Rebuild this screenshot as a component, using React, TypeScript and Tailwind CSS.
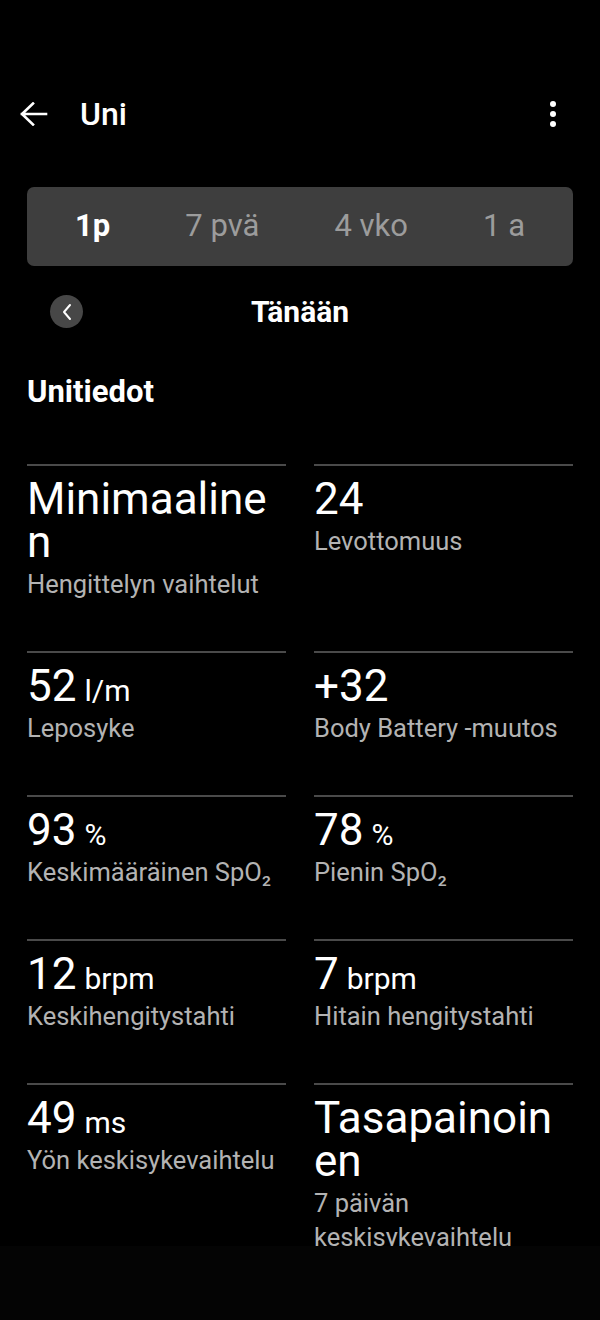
import React from "react";

const font = { fontFamily: "Roboto, 'Noto Sans', sans-serif" };

type Cell = { value: string; unit?: string; label: string };

const rows: [Cell, Cell][] = [
  [
    { value: "Minimaalinen", label: "Hengittelyn vaihtelut" },
    { value: "24", label: "Levottomuus" },
  ],
  [
    { value: "52", unit: "l/m", label: "Leposyke" },
    { value: "+32", label: "Body Battery -muutos" },
  ],
  [
    { value: "93", unit: "%", label: "Keskimääräinen SpO₂" },
    { value: "78", unit: "%", label: "Pienin SpO₂" },
  ],
  [
    { value: "12", unit: "brpm", label: "Keskihengitystahti" },
    { value: "7", unit: "brpm", label: "Hitain hengitystahti" },
  ],
  [
    { value: "49", unit: "ms", label: "Yön keskisykevaihtelu" },
    { value: "Tasapainoinen", label: "7 päivän keskisykevaihtelu" },
  ],
];

function StatCell({ c }: { c: Cell }) {
  return (
    <div className="border-t-[2px] border-[#4a4a4a] pt-[12px] pb-[50px] min-w-0">
      <div className="text-[44px] leading-[43px] text-white break-words">
        {c.value}
        {c.unit && <span className="text-[30px] leading-none ml-[8px]">{c.unit}</span>}
      </div>
      <div className="mt-[3px] text-[25.5px] leading-[34px] text-[#b3b3b3]">{c.label}</div>
    </div>
  );
}

export default function App() {
  return (
    <div className="w-[600px] h-[1320px] bg-black flex flex-col overflow-hidden" style={font}>
      <div className="h-[1246px] overflow-hidden shrink-0">
        {/* header */}
        <div className="h-[80px] mt-[74px] flex items-center px-[20px]">
          <svg width="28" height="24" viewBox="0 0 28 24" className="shrink-0">
            <path d="M2 12 H26 M13 1.5 L2 12 L13 22.5" stroke="white" strokeWidth="2.6" fill="none" strokeLinecap="square" />
          </svg>
          <div className="ml-[32px] text-[32px] font-medium text-white leading-none">Uni</div>
          <div className="ml-auto mr-[24px] flex flex-col gap-[4px] items-center">
            <div className="w-[6px] h-[6px] rounded-full bg-white" />
            <div className="w-[6px] h-[6px] rounded-full bg-white" />
            <div className="w-[6px] h-[6px] rounded-full bg-white" />
          </div>
        </div>

        {/* segmented */}
        <div className="mx-[27px] mt-[33px] h-[79px] rounded-[7px] bg-[#3e3e3e] flex items-center justify-between px-[48px] text-[31px]">
          <span className="text-white font-bold">1p</span>
          <span className="text-[#9c9c9c]">7 pvä</span>
          <span className="text-[#9c9c9c]">4 vko</span>
          <span className="text-[#9c9c9c]">1 a</span>
        </div>

        {/* date nav */}
        <div className="relative mt-[29px] h-[33px] flex items-center justify-center">
          <div className="absolute left-[50px] top-0 w-[33px] h-[33px] rounded-full bg-[#474747] flex items-center justify-center">
            <svg width="12" height="18" viewBox="0 0 12 18">
              <path d="M9 2 L3 9 L9 16" stroke="white" strokeWidth="2" fill="none" strokeLinecap="round" strokeLinejoin="round" />
            </svg>
          </div>
          <span className="text-[30px] font-bold text-white leading-none">Tänään</span>
        </div>

        {/* section title */}
        <div className="mt-[48px] px-[27px] text-[31px] font-bold text-white leading-none">Unitiedot</div>

        {/* grid */}
        <div className="mt-[57px] px-[27px] grid grid-cols-2 gap-x-[28px]">
          {rows.map((r, i) => (
            <React.Fragment key={i}>
              <StatCell c={r[0]} />
              <StatCell c={r[1]} />
            </React.Fragment>
          ))}
        </div>
      </div>
      <div className="flex-1 bg-[#040404]" />
    </div>
  );
}
